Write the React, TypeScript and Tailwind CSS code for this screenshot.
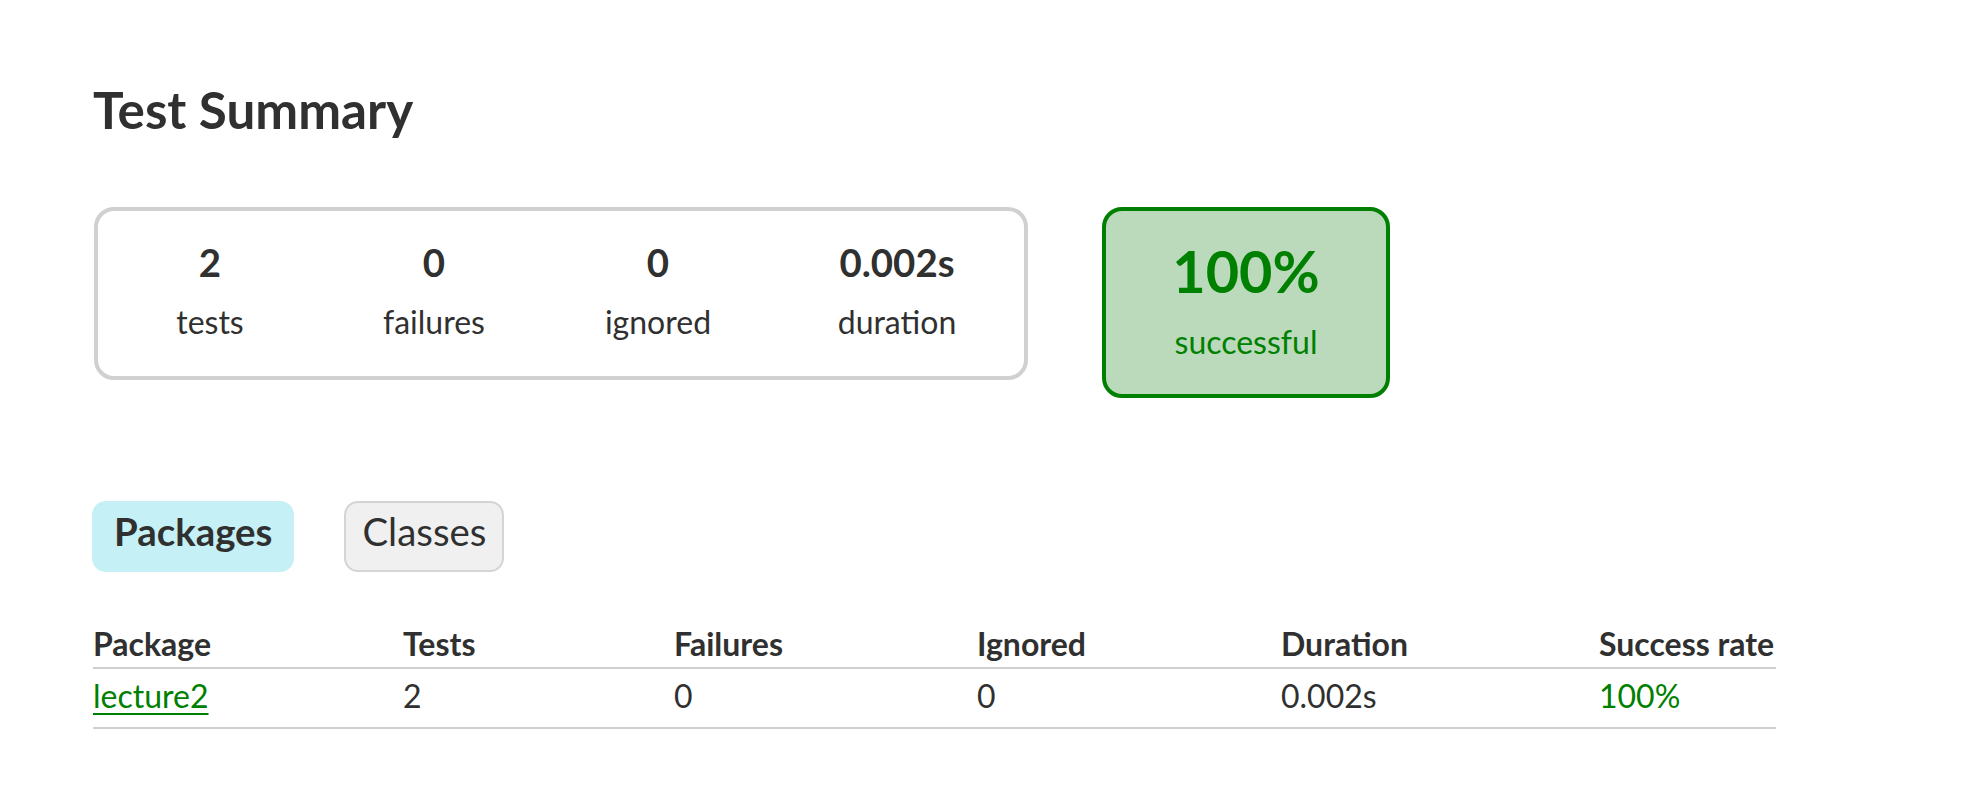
import React from 'react';

// Gradle-style test report summary, rendered at 2x zoom

type Counter = { value: string; label: string; width: string };

const COUNTERS: Counter[] = [
  { value: '2', label: 'tests', width: 'w-[220px]' },
  { value: '0', label: 'failures', width: 'w-[220px]' },
  { value: '0', label: 'ignored', width: 'w-[220px]' },
  { value: '0.002s', label: 'duration', width: 'w-[250px]' },
];

const COLS = 'grid grid-cols-[310px_271px_303px_304px_318px_177px]';

const HEADERS = ['Package', 'Tests', 'Failures', 'Ignored', 'Duration', 'Success rate'];

export default function App() {
  return (
    <div className="min-h-screen bg-white pt-[79px] pl-[93px] font-['Lato',sans-serif] text-[32px] text-[#303030]">
      <h1 className="text-[51.2px] leading-[61px] font-bold whitespace-nowrap">Test Summary</h1>

      {/* summary boxes */}
      <div className="mt-[67px] flex items-start">
        <div className="ml-px flex rounded-[20px] border-4 border-[#d0d0d0]">
          {COUNTERS.map(c => (
            <div key={c.label} className="p-[2px]">
              <div className={`${c.width} pt-[31px] pb-[27px] text-center`}>
                <div className="mb-[17px] text-[38.4px] leading-[36px] font-bold">{c.value}</div>
                <p className="leading-[50px]">{c.label}</p>
              </div>
            </div>
          ))}
        </div>

        <div className="ml-[74px] w-[288px] rounded-[20px] border-4 border-[#008000] bg-[#bbd9bb] pt-[31px] pb-[26px] text-center text-[#008000]">
          <div className="mb-[17px] text-[57.6px] leading-[57px] font-bold">100%</div>
          <p className="leading-[52px]">successful</p>
        </div>
      </div>

      {/* tabs */}
      <ul className="mt-[103px] -ml-px flex">
        <li className="mr-[50px] rounded-[14px] border-2 border-[#c5f0f5] bg-[#c5f0f5] px-5 pt-[5px] pb-[15px]">
          <a className="block text-[38.4px] leading-[47px] font-bold">Packages</a>
        </li>
        <li className="rounded-[14px] border-2 border-[#d4d4d4] bg-[#f0f0f0] px-4 pt-[5px] pb-[15px]">
          <a className="block text-[38.4px] leading-[47px]">Classes</a>
        </li>
      </ul>

      {/* package table */}
      <div className="mt-[49px] w-[1683px]">
        <div className={`${COLS} border-b-2 border-[#d0d0d0] pt-[3px] pb-[3px] font-bold leading-[40px]`}>
          {HEADERS.map(h => (
            <div key={h} className="whitespace-nowrap">{h}</div>
          ))}
        </div>
        <div className={`${COLS} border-b-2 border-[#d0d0d0] pt-[7px] pb-[11px] leading-[40px]`}>
          <div>
            <a className="text-[#008000] underline decoration-2 underline-offset-[5px]">lecture2</a>
          </div>
          <div>2</div>
          <div>0</div>
          <div>0</div>
          <div>0.002s</div>
          <div className="text-[#008000]">100%</div>
        </div>
      </div>
    </div>
  );
}
